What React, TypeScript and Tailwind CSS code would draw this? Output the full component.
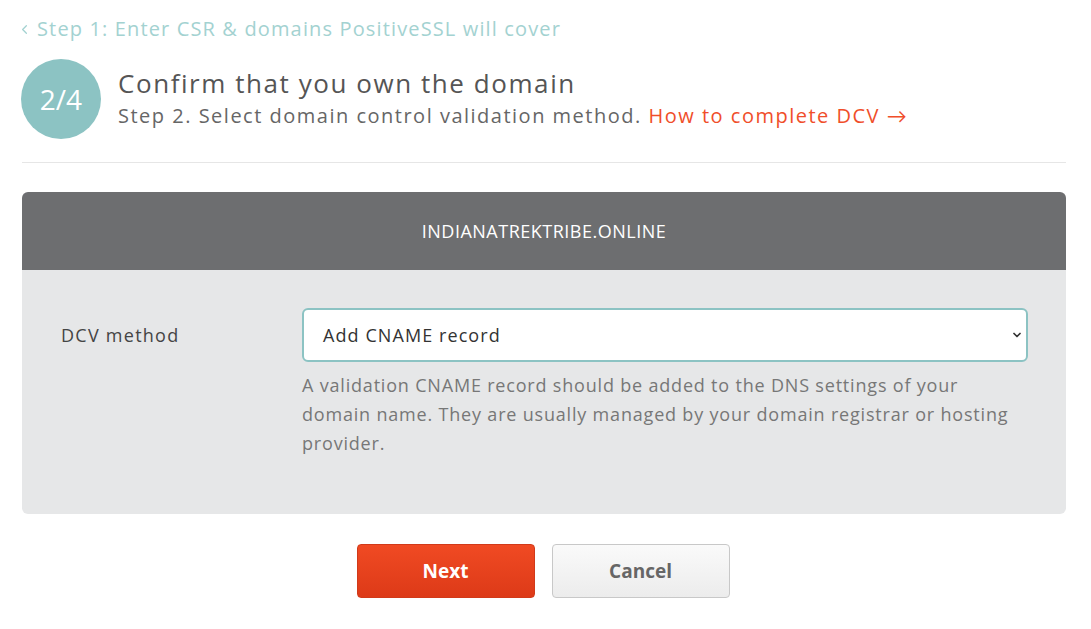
import { ChevronLeft, ChevronDown } from 'lucide-react'

export default function App() {
  return (
    <div className="min-h-screen bg-white font-['Open_Sans','Lato',sans-serif]">
      <div className="w-[1044px] ml-[22px] pt-[16px]">
        {/* Back link */}
        <a className="flex items-center gap-[5px] -ml-[5px] text-[20px] leading-[26px] text-[#a3d2d1]">
          <ChevronLeft className="w-[15px] h-[15px]" strokeWidth={2} />
          <span className="tracking-[0.057em]">Step 1: Enter CSR &amp; domains PositiveSSL will cover</span>
        </a>

        {/* Step header */}
        <div className="flex items-center gap-[17px] mt-[17px] -ml-[1px]">
          <div className="w-[80px] h-[80px] rounded-full bg-[#8cc3c3] flex items-center justify-center text-white text-[28px]">
            2/4
          </div>
          <div className="-mt-[3px]">
            <h1 className="text-[26px] leading-[34px] text-[#555] tracking-[0.06em]">Confirm that you own the domain</h1>
            <p className="text-[20px] leading-[28px] text-[#666] mt-[2px] tracking-[0.075em]">
              Step 2. Select domain control validation method.{' '}
              <a className="text-[#f04e2a]">How to complete DCV →</a>
            </p>
          </div>
        </div>

        <div className="h-px bg-[#e6e6e6] mt-[23px]" />

        {/* Domain panel */}
        <div className="mt-[29px] rounded-[6px] overflow-hidden">
          <div className="h-[78px] bg-[#6d6e70] flex items-center justify-center">
            <span className="text-white text-[18px] tracking-[0.5px]">INDIANATREKTRIBE.ONLINE</span>
          </div>
          <div className="bg-[#e6e7e8] h-[244px] flex pt-[38px]">
            <div className="w-[280px] pl-[39px] pt-[15px] text-[18px] leading-[24px] text-[#444] tracking-[0.07em]">DCV method</div>
            <div className="w-[726px]">
              <div className="h-[54px] bg-white border-2 border-[#8cc3c3] rounded-[6px] flex items-center justify-between pl-[19px] pr-[3px] text-[18px] text-[#333]">
                <span className="tracking-[0.06em]">Add CNAME record</span>
                <ChevronDown className="w-[12px] h-[12px] text-[#333]" strokeWidth={3.5} />
              </div>
              <p className="mt-[9px] pr-[14px] text-[18px] leading-[29px] text-[#777] tracking-[0.045em]">
                A validation CNAME record should be added to the DNS settings of your domain name. They are usually managed by your domain registrar or hosting provider.
              </p>
            </div>
          </div>
        </div>

        {/* Actions */}
        <div className="flex justify-center gap-[17px] mt-[30px] pr-[2px]">
          <button className="w-[178px] h-[54px] rounded-[4px] border border-[#d13a1a] bg-gradient-to-b from-[#f04a23] to-[#dd3a18] text-white text-[19px] font-bold">
            Next
          </button>
          <button className="w-[178px] h-[54px] rounded-[4px] border border-[#c8c8c8] bg-gradient-to-b from-[#fafafa] to-[#ececec] text-[#666] text-[19px] font-bold">
            Cancel
          </button>
        </div>
      </div>
    </div>
  )
}
